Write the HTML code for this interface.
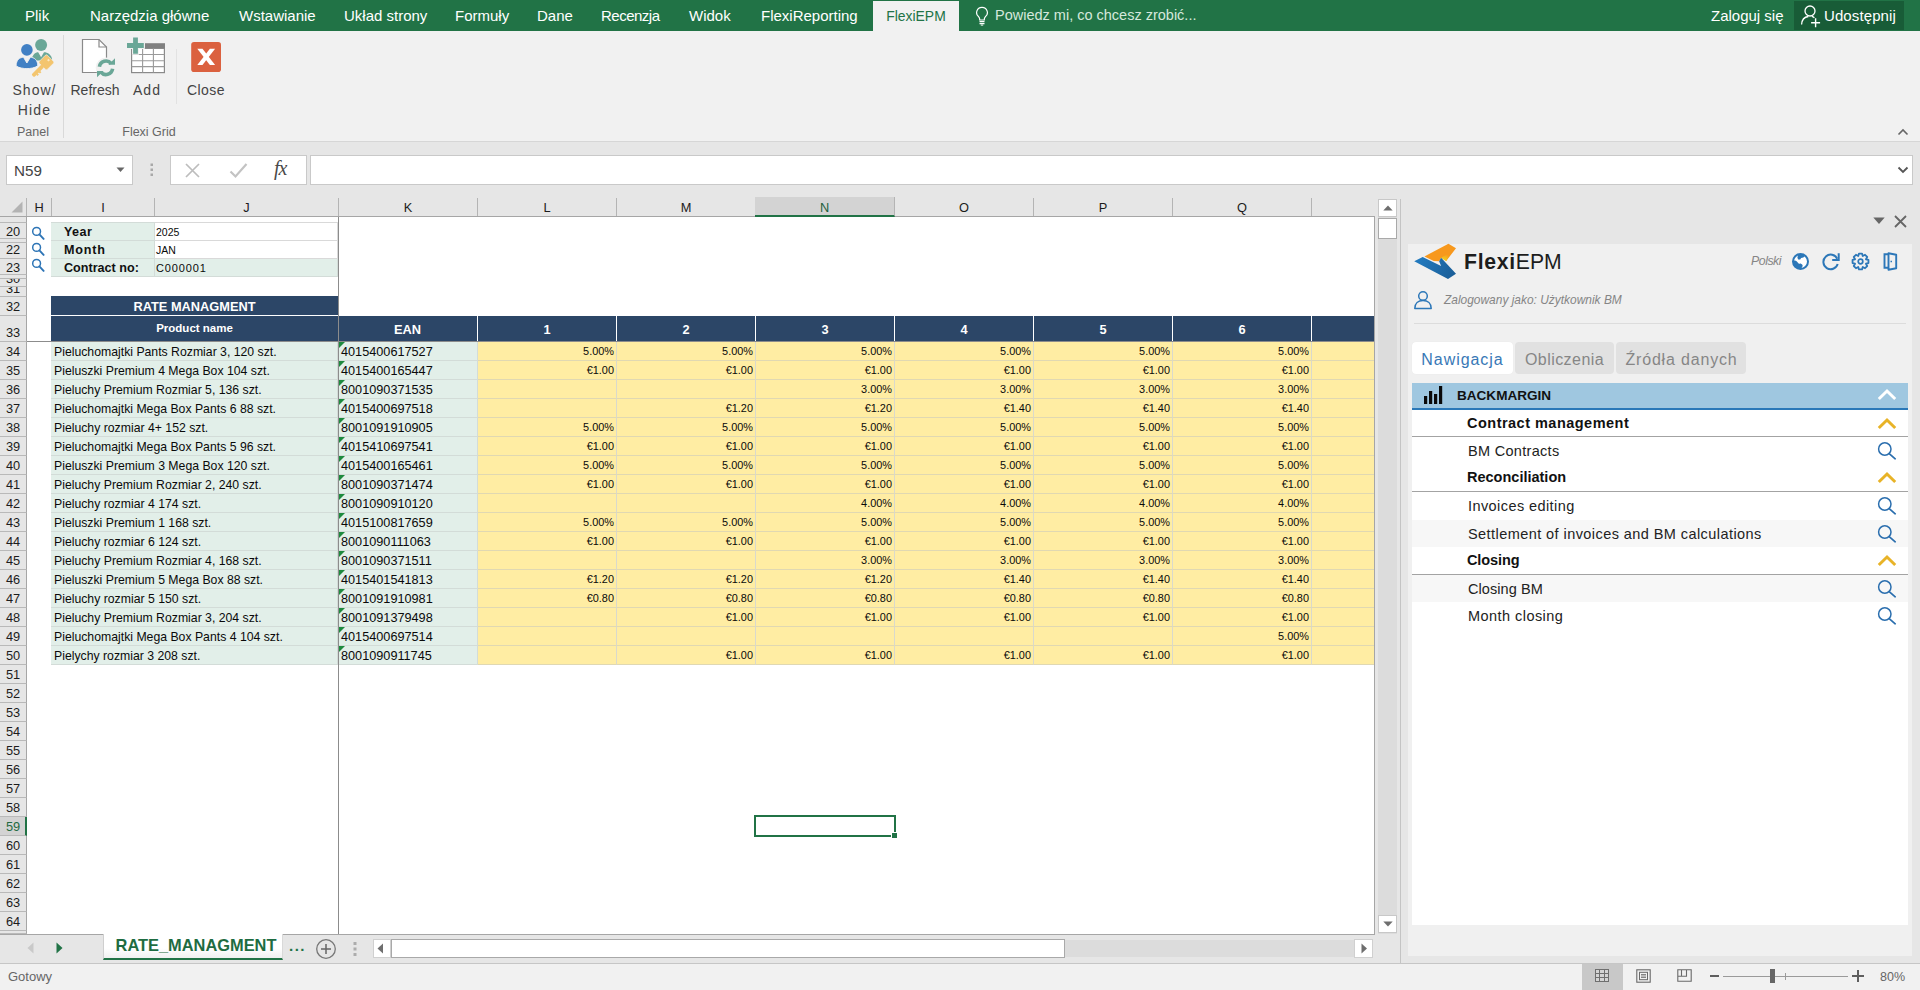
<!DOCTYPE html>
<html lang="pl"><head><meta charset="utf-8"><title>RATE_MANAGMENT - Excel</title>
<style>
*{box-sizing:border-box;margin:0;padding:0}
html,body{width:1920px;height:990px;overflow:hidden;background:#e6e6e6;font-family:"Liberation Sans",sans-serif;color:#444}
body{position:relative}
div,svg,span,i{position:absolute}
/* ribbon */
#tabs{left:0;top:0;width:1920px;height:31px;background:#217346}
#tabs .t{top:0;height:31px;line-height:31px;font-size:15px;color:#fff;white-space:nowrap}
#tabs .act{left:873px;top:1px;width:86px;height:30px;background:#f1f1f1}
#tabs .act span{left:0;width:86px;text-align:center;line-height:31px;font-size:13.9px;color:#217346}
#share{left:1794px;top:1px;width:110px;height:29px;background:#185c37}
#rib{left:0;top:31px;width:1920px;height:111px;background:#f1f1f1;border-bottom:1px solid #d6d6d6}
#rib .lb{font-size:14px;color:#444;white-space:nowrap;text-align:center;line-height:20px}
#rib .gl{font-size:12.5px;color:#666;white-space:nowrap;text-align:center}
#rib .sep{width:1px;background:#d9d9d9}
/* formula bar */
.fbox{background:#fff;border:1px solid #c9c9c9;top:155px;height:30px}
/* grid */
#grid{top:0;left:0;width:1375px;height:934px;background:transparent;margin:0}
.sheet{left:27px;top:217px;width:1347px;height:717px;background:#fff}
.colhdr{left:0;top:197px;width:1375px;height:20px;background:#e6e6e6;border-bottom:1px solid #a6a6a6}
.colhdr .ch{top:1px;height:18px;line-height:19px;font-size:12.8px;color:#1c1c1c;text-align:center;border-right:1px solid #b4b4b4}
.colhdr .ch.sel{background:#d3d3d3;color:#1f5f3c;border-bottom:2px solid #217346;height:20px;top:0;line-height:21px}
.colhdr .ch.last{border-right:none}
.selall{left:11px;top:4px}
.rowhdr{left:0;top:0;width:27px;height:934px}
.rh{left:0;width:27px;background:#e6e6e6;border-right:1px solid #a6a6a6;border-bottom:1px solid #b9b9b9}
.rh span{left:0;width:26px;text-align:center;font-size:12.8px;color:#1c1c1c;top:50%;margin-top:-7px;line-height:15px}
.rh.clip{overflow:hidden}
.rh.clip span{margin-top:0}
.rh.sel{background:#d3d3d3;border-right:2px solid #217346}
.rh.sel span{color:#1f6a42}
.gcell{background:#e2efe9;border-right:1px solid #d3dcd8;border-bottom:1px solid #d3dcd8;white-space:nowrap;color:#0a0a0a;overflow:hidden}
.wcell{background:#fff;border-right:1px solid #d9d9d9;border-bottom:1px solid #d9d9d9;white-space:nowrap;color:#0a0a0a}
.lab{font-weight:700;font-size:12.6px;line-height:18px;padding-left:13px;color:#111}
.val{font-size:10.5px;line-height:19px;padding-left:1px}
.nm{font-size:12.25px;line-height:20px;padding-left:3px}
.ean{font-size:12.7px;line-height:20px;padding-left:2px}
.ean i{left:0;top:0;width:0;height:0;border-top:6px solid #1e8a3e;border-right:6px solid transparent}
.ycell{background:#ffeda3;border-right:1px solid #d9d9cc;border-bottom:1px solid #e0d8b2;white-space:nowrap;color:#0a0a0a;font-size:10.9px;line-height:18px;text-align:right;padding-right:2px}
.dk{background:#2c4667;color:#fff;font-weight:700;text-align:center;white-space:nowrap}
.t1{font-size:12.8px;line-height:21px}
.t2{font-size:11.5px;line-height:24px}
.t3{font-size:12.8px;line-height:28px}
.fz{background:#8c8c8c}
.selbox{left:754px;top:815px;width:142px;height:22px;border:2px solid #217346}
.selh{left:891px;top:832px;width:7px;height:7px;background:#217346;border:1px solid #fff}
.mag{}
</style></head><body>

<div id="tabs">
<div class="t" style="left:25px">Plik</div>
<div class="t" style="left:90px">Narzędzia główne</div>
<div class="t" style="left:239px">Wstawianie</div>
<div class="t" style="left:344px">Układ strony</div>
<div class="t" style="left:455px">Formuły</div>
<div class="t" style="left:537px">Dane</div>
<div class="t" style="left:601px;letter-spacing:-.5px">Recenzja</div>
<div class="t" style="left:689px">Widok</div>
<div class="t" style="left:761px">FlexiReporting</div>
<div class="act"><span>FlexiEPM</span></div>
<svg style="left:975px;top:6px" width="14" height="20" viewBox="0 0 14 20"><path d="M7 1.300a5.300 5.300 0 0 0-3.300 9.500c.7.700 1 1.500 1 2.500v.700h4.600v-.700c0-1 .3-1.800 1-2.500A5.300 5.300 0 0 0 7 1.300Z" fill="none" stroke="#fff" stroke-width="1.200"/><path d="M4.500 15.700h5M4.500 17.600h5" stroke="#fff" stroke-width="1.300"/><path d="M5.800 19.100h2.400" stroke="#fff" stroke-width="1"/></svg>
<div class="t" style="left:995px;color:#d5e8dc;font-size:14.5px">Powiedz mi, co chcesz zrobić...</div>
<div class="t" style="left:1711px">Zaloguj się</div>
<div id="share"></div>
<svg style="left:1800px;top:4px" width="22" height="24" viewBox="0 0 22 24"><circle cx="10" cy="7" r="5" fill="none" stroke="#fff" stroke-width="1.300"/><path d="M1.600 20.500c.2-4.500 2.800-7.500 6.800-8" fill="none" stroke="#fff" stroke-width="1.300"/><path d="M11.800 12.400c1 .2 1.900.7 2.600 1.300" fill="none" stroke="#fff" stroke-width="1.300"/><path d="M15.600 14.200v9M11.100 18.700h9" stroke="#fff" stroke-width="1.400"/></svg>
<div class="t" style="left:1824px;letter-spacing:.1px">Udostępnij</div>
</div>
<div id="rib">
<!-- Show/Hide -->
<svg style="left:14px;top:6px" width="44" height="42" viewBox="0 0 44 42">
 <circle cx="27.100" cy="7.900" r="6" fill="#6aa797"/>
 <path d="M17.800 23.500C17.800 17.800 21.500 15.200 24.200 15.200L27.100 20.200 30 15.200C33.500 15.200 38.200 17.800 38.200 23.500Z" fill="#6aa797"/>
 <circle cx="12.900" cy="12.900" r="6.300" fill="#f1f1f1"/>
 <circle cx="12.900" cy="12.900" r="5.800" fill="#4180c4"/>
 <path d="M2.100 28.800C2.100 22.800 6 20.300 9.500 20.300L12.900 26 16.300 20.300C20 20.300 23.800 22.800 23.800 28.800 21 31 16 31.600 12.900 31.600S4.500 31 2.100 28.800Z" fill="#4180c4" stroke="#f1f1f1" stroke-width=".9"/>
 <g transform="translate(32.400 25.300) rotate(45)"><rect x="-5.700" y="-5.700" width="11.400" height="11.400" rx="1.600" fill="#f3c56f" stroke="#f1f1f1" stroke-width=".6"/><rect x="-1.900" y="5" width="3.800" height="14.300" rx="1.200" fill="#f3c56f"/><rect x="1.500" y="10.500" width="1.900" height="2" fill="#f3c56f"/><rect x="1.500" y="14" width="1.900" height="2" fill="#f3c56f"/><rect x="-1" y="-4" width="2" height="2" fill="#fbe9c3"/></g>
</svg>
<div class="lb" style="left:4px;top:49px;width:60px;letter-spacing:1px;padding-left:1px">Show/</div>
<div class="lb" style="left:4px;top:69px;width:60px;letter-spacing:1.2px;padding-left:1px">Hide</div>
<div class="gl" style="left:3px;top:94px;width:60px">Panel</div>
<div class="sep" style="left:63px;top:4px;height:103px"></div>
<!-- Refresh -->
<svg style="left:80px;top:7px" width="38" height="42" viewBox="0 0 38 42">
 <path d="M2.500 1.500h16.500l7.500 7.500v25.500h-24Z" fill="#fff" stroke="#8a8a8a" stroke-width="1.200"/>
 <path d="M19 1.500v7.500h7.500" fill="none" stroke="#8a8a8a" stroke-width="1.200"/>
 <circle cx="26" cy="29.800" r="10.300" fill="#f1f1f1"/>
 <path d="M19.400 28.800a6.700 6.700 0 0 1 11.800-3.300" fill="none" stroke="#6aa797" stroke-width="3.600"/>
 <path d="M28.400 26.700h6.600v-6.400Z" fill="#6aa797"/>
 <path d="M32.600 30.800a6.700 6.700 0 0 1-11.800 3.300" fill="none" stroke="#6aa797" stroke-width="3.600"/>
 <path d="M23.600 32.900h-6.600v6.400Z" fill="#6aa797"/>
</svg>
<div class="lb" style="left:65px;top:49px;width:60px">Refresh</div>
<!-- Add -->
<svg style="left:126px;top:5px" width="42" height="40" viewBox="0 0 42 40">
 <rect x="5.600" y="12.300" width="32.800" height="24.300" fill="#fff" stroke="#8a8a8a" stroke-width="1.200"/>
 <rect x="19" y="7.200" width="20" height="5.300" fill="#808080"/>
 <path d="M5.600 18.500h32.800M5.600 24.700h32.800M5.600 30.600h32.800M16.600 12.500v24M27.400 12.500v24" stroke="#9a9a9a" stroke-width="1.100" fill="none"/>
 <path d="M0 6.200h6v-5.800h7v5.800h5.800v6.700h-5.800v5.900h-7v-5.900h-6Z" fill="#f1f1f1"/>
 <path d="M9.500 1.400v16.400M1 9.500h16.800" stroke="#6aa797" stroke-width="4.800"/>
</svg>
<div class="lb" style="left:117px;top:49px;width:60px;letter-spacing:1px">Add</div>
<div class="sep" style="left:176px;top:18px;height:55px;background:#e2e2e2"></div>
<!-- Close -->
<svg style="left:191px;top:11px" width="31" height="31" viewBox="0 0 31 31">
 <rect x="0.200" y="0" width="29.800" height="30" rx="2.800" fill="#db613f"/>
 <path d="M6.300 6.700h5.200l12.600 16.300h-5.200Z" fill="#fff"/><path d="M24.100 6.700h-5.200l-12.600 16.300h5.200Z" fill="#fff"/>
</svg>
<div class="lb" style="left:176px;top:49px;width:60px;letter-spacing:.4px">Close</div>
<div class="gl" style="left:109px;top:94px;width:80px">Flexi Grid</div>
<svg style="left:1897px;top:97px" width="12" height="8" viewBox="0 0 12 8"><path d="M1.500 6.500l4.500-4.500 4.500 4.500" fill="none" stroke="#666" stroke-width="1.600"/></svg>
</div>

<div class="fbox" style="left:6px;width:127px"></div>
<div style="left:14px;top:162px;font-size:15.200px;line-height:18px;color:#444">N59</div>
<svg style="left:116px;top:167px" width="9" height="6" viewBox="0 0 9 6"><path d="M0.500 0.500h8l-4 4.500Z" fill="#666"/></svg>
<svg style="left:150px;top:163px" width="4" height="14" viewBox="0 0 4 14"><rect x="0.500" y="0.500" width="2.500" height="2.500" fill="#a8a8a8"/><rect x="0.500" y="5.500" width="2.500" height="2.500" fill="#a8a8a8"/><rect x="0.500" y="10.500" width="2.500" height="2.500" fill="#a8a8a8"/></svg>
<div class="fbox" style="left:170px;width:137px"></div>
<svg style="left:184px;top:162px" width="17" height="17" viewBox="0 0 17 17"><path d="M2 2l13 13M15 2l-13 13" stroke="#bdbdbd" stroke-width="1.700"/></svg>
<svg style="left:229px;top:162px" width="19" height="17" viewBox="0 0 19 17"><path d="M1.500 9.500l5 5 11-12.500" fill="none" stroke="#c3c3c3" stroke-width="2.200"/></svg>
<div style="left:274px;top:157px;width:20px;font-family:'Liberation Serif',serif;font-style:italic;font-weight:400;font-size:20px;line-height:22px;color:#4a4a4a;letter-spacing:-1px">fx</div>
<div class="fbox" style="left:310px;width:1603px"></div>
<svg style="left:1897px;top:166px" width="12" height="8" viewBox="0 0 12 8"><path d="M1.500 1.500l4.500 4.500 4.500-4.500" fill="none" stroke="#555" stroke-width="1.800"/></svg>
<div class="sheet"></div>

<div id="grid">
<div class="colhdr">
<div class="ch" style="left:27px;width:25px">H</div>
<div class="ch" style="left:52px;width:103px">I</div>
<div class="ch" style="left:155px;width:184px">J</div>
<div class="ch" style="left:339px;width:139px">K</div>
<div class="ch" style="left:478px;width:139px">L</div>
<div class="ch" style="left:617px;width:139px">M</div>
<div class="ch sel" style="left:755px;width:140px">N</div>
<div class="ch" style="left:895px;width:139px">O</div>
<div class="ch" style="left:1034px;width:139px">P</div>
<div class="ch" style="left:1173px;width:139px">Q</div>
<div class="ch last" style="left:1312px;width:63px"></div>
<div class="ch" style="left:0;width:27px"></div>
<svg class="selall" width="12" height="12" viewBox="0 0 12 12"><path d="M11.5 0.5V11.5H0.5Z" fill="#b3b3b3"/></svg>
</div>
<div class="rowhdr">
<div class="rh" style="top:217px;height:6px"></div>
<div class="rh" style="top:223px;height:16px"><span>20</span></div>
<div class="rh" style="top:239px;height:4px"></div>
<div class="rh" style="top:243px;height:16px"><span style="margin-top:-8.500px">22</span></div>
<div class="rh" style="top:259px;height:16px"><span>23</span></div>
<div class="rh" style="top:275px;height:4px"></div>
<div class="rh clip" style="top:279px;height:8px"><span style="top:-8.500px">30</span></div>
<div class="rh clip" style="top:287px;height:10px"><span style="top:-6.500px">31</span></div>
<div class="rh" style="top:297px;height:19px"><span>32</span></div>
<div class="rh" style="top:316px;height:26px"><span style="top:auto;bottom:1px;margin:0">33</span></div>
<div class="rh" style="top:342px;height:19px"><span>34</span></div>
<div class="rh" style="top:361px;height:19px"><span>35</span></div>
<div class="rh" style="top:380px;height:19px"><span>36</span></div>
<div class="rh" style="top:399px;height:19px"><span>37</span></div>
<div class="rh" style="top:418px;height:19px"><span>38</span></div>
<div class="rh" style="top:437px;height:19px"><span>39</span></div>
<div class="rh" style="top:456px;height:19px"><span>40</span></div>
<div class="rh" style="top:475px;height:19px"><span>41</span></div>
<div class="rh" style="top:494px;height:19px"><span>42</span></div>
<div class="rh" style="top:513px;height:19px"><span>43</span></div>
<div class="rh" style="top:532px;height:19px"><span>44</span></div>
<div class="rh" style="top:551px;height:19px"><span>45</span></div>
<div class="rh" style="top:570px;height:19px"><span>46</span></div>
<div class="rh" style="top:589px;height:19px"><span>47</span></div>
<div class="rh" style="top:608px;height:19px"><span>48</span></div>
<div class="rh" style="top:627px;height:19px"><span>49</span></div>
<div class="rh" style="top:646px;height:19px"><span>50</span></div>
<div class="rh" style="top:665px;height:19px"><span>51</span></div>
<div class="rh" style="top:684px;height:19px"><span>52</span></div>
<div class="rh" style="top:703px;height:19px"><span>53</span></div>
<div class="rh" style="top:722px;height:19px"><span>54</span></div>
<div class="rh" style="top:741px;height:19px"><span>55</span></div>
<div class="rh" style="top:760px;height:19px"><span>56</span></div>
<div class="rh" style="top:779px;height:19px"><span>57</span></div>
<div class="rh" style="top:798px;height:19px"><span>58</span></div>
<div class="rh sel" style="top:817px;height:19px"><span>59</span></div>
<div class="rh" style="top:836px;height:19px"><span>60</span></div>
<div class="rh" style="top:855px;height:19px"><span>61</span></div>
<div class="rh" style="top:874px;height:19px"><span>62</span></div>
<div class="rh" style="top:893px;height:19px"><span>63</span></div>
<div class="rh" style="top:912px;height:19px"><span>64</span></div>
<div class="rh" style="top:931px;height:3px"></div>
</div>
<div class="gcell lab" style="left:51px;top:222px;width:104px;height:19px;border-top:1px solid #d3dcd8;letter-spacing:.4px">Year</div>
<div class="wcell val" style="left:155px;top:222px;width:183px;height:19px;border-top:1px solid #d9d9d9">2025</div>
<div class="gcell lab" style="left:51px;top:241px;width:104px;height:18px;letter-spacing:.8px">Month</div>
<div class="wcell val" style="left:155px;top:241px;width:183px;height:18px">JAN</div>
<div class="gcell lab" style="left:51px;top:259px;width:104px;height:18px">Contract no:</div>
<div class="gcell val" style="left:155px;top:259px;width:183px;height:18px;font-size:11px;letter-spacing:.85px">C000001</div>
<svg class="mag" style="left:31px;top:226px" width="14" height="14" viewBox="0 0 14 14"><circle cx="5.6" cy="5.4" r="3.9" fill="none" stroke="#2e75b6" stroke-width="1.5"/><path d="M8.4 8.4L12.6 12.9" stroke="#2e75b6" stroke-width="1.9" stroke-linecap="round"/></svg>
<svg class="mag" style="left:31px;top:242px" width="14" height="14" viewBox="0 0 14 14"><circle cx="5.6" cy="5.4" r="3.9" fill="none" stroke="#2e75b6" stroke-width="1.5"/><path d="M8.4 8.4L12.6 12.9" stroke="#2e75b6" stroke-width="1.9" stroke-linecap="round"/></svg>
<svg class="mag" style="left:31px;top:258px" width="14" height="14" viewBox="0 0 14 14"><circle cx="5.6" cy="5.4" r="3.9" fill="none" stroke="#2e75b6" stroke-width="1.5"/><path d="M8.4 8.4L12.6 12.9" stroke="#2e75b6" stroke-width="1.9" stroke-linecap="round"/></svg>
<div class="dk t1" style="left:51px;top:296px;width:287px;height:19px">RATE MANAGMENT</div>
<div class="dk t2" style="left:51px;top:316px;width:287px;height:25px">Product name</div>
<div class="dk t3" style="left:338px;top:316px;width:139px;height:25px">EAN</div>
<div class="dk t3" style="left:478px;top:316px;width:138px;height:25px">1</div>
<div class="dk t3" style="left:617px;top:316px;width:138px;height:25px">2</div>
<div class="dk t3" style="left:756px;top:316px;width:138px;height:25px">3</div>
<div class="dk t3" style="left:895px;top:316px;width:138px;height:25px">4</div>
<div class="dk t3" style="left:1034px;top:316px;width:138px;height:25px">5</div>
<div class="dk t3" style="left:1173px;top:316px;width:138px;height:25px">6</div>
<div class="dk t3" style="left:1312px;top:316px;width:62px;height:25px"></div>
<div class="gcell nm" style="left:51px;top:342px;width:287px;height:19px">Pieluchomajtki Pants Rozmiar 3, 120 szt.</div>
<div class="gcell ean" style="left:339px;top:342px;width:139px;height:19px"><i></i>4015400617527</div>
<div class="ycell" style="left:478px;top:342px;width:139px;height:19px">5.00%</div>
<div class="ycell" style="left:617px;top:342px;width:139px;height:19px">5.00%</div>
<div class="ycell" style="left:756px;top:342px;width:139px;height:19px">5.00%</div>
<div class="ycell" style="left:895px;top:342px;width:139px;height:19px">5.00%</div>
<div class="ycell" style="left:1034px;top:342px;width:139px;height:19px">5.00%</div>
<div class="ycell" style="left:1173px;top:342px;width:139px;height:19px">5.00%</div>
<div class="ycell" style="left:1312px;top:342px;width:63px;height:19px"></div>
<div class="gcell nm" style="left:51px;top:361px;width:287px;height:19px">Pieluszki Premium 4 Mega Box 104 szt.</div>
<div class="gcell ean" style="left:339px;top:361px;width:139px;height:19px"><i></i>4015400165447</div>
<div class="ycell" style="left:478px;top:361px;width:139px;height:19px">€1.00</div>
<div class="ycell" style="left:617px;top:361px;width:139px;height:19px">€1.00</div>
<div class="ycell" style="left:756px;top:361px;width:139px;height:19px">€1.00</div>
<div class="ycell" style="left:895px;top:361px;width:139px;height:19px">€1.00</div>
<div class="ycell" style="left:1034px;top:361px;width:139px;height:19px">€1.00</div>
<div class="ycell" style="left:1173px;top:361px;width:139px;height:19px">€1.00</div>
<div class="ycell" style="left:1312px;top:361px;width:63px;height:19px"></div>
<div class="gcell nm" style="left:51px;top:380px;width:287px;height:19px">Pieluchy Premium Rozmiar 5, 136 szt.</div>
<div class="gcell ean" style="left:339px;top:380px;width:139px;height:19px"><i></i>8001090371535</div>
<div class="ycell" style="left:478px;top:380px;width:139px;height:19px"></div>
<div class="ycell" style="left:617px;top:380px;width:139px;height:19px"></div>
<div class="ycell" style="left:756px;top:380px;width:139px;height:19px">3.00%</div>
<div class="ycell" style="left:895px;top:380px;width:139px;height:19px">3.00%</div>
<div class="ycell" style="left:1034px;top:380px;width:139px;height:19px">3.00%</div>
<div class="ycell" style="left:1173px;top:380px;width:139px;height:19px">3.00%</div>
<div class="ycell" style="left:1312px;top:380px;width:63px;height:19px"></div>
<div class="gcell nm" style="left:51px;top:399px;width:287px;height:19px">Pieluchomajtki Mega Box Pants 6 88 szt.</div>
<div class="gcell ean" style="left:339px;top:399px;width:139px;height:19px"><i></i>4015400697518</div>
<div class="ycell" style="left:478px;top:399px;width:139px;height:19px"></div>
<div class="ycell" style="left:617px;top:399px;width:139px;height:19px">€1.20</div>
<div class="ycell" style="left:756px;top:399px;width:139px;height:19px">€1.20</div>
<div class="ycell" style="left:895px;top:399px;width:139px;height:19px">€1.40</div>
<div class="ycell" style="left:1034px;top:399px;width:139px;height:19px">€1.40</div>
<div class="ycell" style="left:1173px;top:399px;width:139px;height:19px">€1.40</div>
<div class="ycell" style="left:1312px;top:399px;width:63px;height:19px"></div>
<div class="gcell nm" style="left:51px;top:418px;width:287px;height:19px">Pieluchy rozmiar 4+ 152 szt.</div>
<div class="gcell ean" style="left:339px;top:418px;width:139px;height:19px"><i></i>8001091910905</div>
<div class="ycell" style="left:478px;top:418px;width:139px;height:19px">5.00%</div>
<div class="ycell" style="left:617px;top:418px;width:139px;height:19px">5.00%</div>
<div class="ycell" style="left:756px;top:418px;width:139px;height:19px">5.00%</div>
<div class="ycell" style="left:895px;top:418px;width:139px;height:19px">5.00%</div>
<div class="ycell" style="left:1034px;top:418px;width:139px;height:19px">5.00%</div>
<div class="ycell" style="left:1173px;top:418px;width:139px;height:19px">5.00%</div>
<div class="ycell" style="left:1312px;top:418px;width:63px;height:19px"></div>
<div class="gcell nm" style="left:51px;top:437px;width:287px;height:19px">Pieluchomajtki Mega Box Pants 5 96 szt.</div>
<div class="gcell ean" style="left:339px;top:437px;width:139px;height:19px"><i></i>4015410697541</div>
<div class="ycell" style="left:478px;top:437px;width:139px;height:19px">€1.00</div>
<div class="ycell" style="left:617px;top:437px;width:139px;height:19px">€1.00</div>
<div class="ycell" style="left:756px;top:437px;width:139px;height:19px">€1.00</div>
<div class="ycell" style="left:895px;top:437px;width:139px;height:19px">€1.00</div>
<div class="ycell" style="left:1034px;top:437px;width:139px;height:19px">€1.00</div>
<div class="ycell" style="left:1173px;top:437px;width:139px;height:19px">€1.00</div>
<div class="ycell" style="left:1312px;top:437px;width:63px;height:19px"></div>
<div class="gcell nm" style="left:51px;top:456px;width:287px;height:19px">Pieluszki Premium 3 Mega Box 120 szt.</div>
<div class="gcell ean" style="left:339px;top:456px;width:139px;height:19px"><i></i>4015400165461</div>
<div class="ycell" style="left:478px;top:456px;width:139px;height:19px">5.00%</div>
<div class="ycell" style="left:617px;top:456px;width:139px;height:19px">5.00%</div>
<div class="ycell" style="left:756px;top:456px;width:139px;height:19px">5.00%</div>
<div class="ycell" style="left:895px;top:456px;width:139px;height:19px">5.00%</div>
<div class="ycell" style="left:1034px;top:456px;width:139px;height:19px">5.00%</div>
<div class="ycell" style="left:1173px;top:456px;width:139px;height:19px">5.00%</div>
<div class="ycell" style="left:1312px;top:456px;width:63px;height:19px"></div>
<div class="gcell nm" style="left:51px;top:475px;width:287px;height:19px">Pieluchy Premium Rozmiar 2, 240 szt.</div>
<div class="gcell ean" style="left:339px;top:475px;width:139px;height:19px"><i></i>8001090371474</div>
<div class="ycell" style="left:478px;top:475px;width:139px;height:19px">€1.00</div>
<div class="ycell" style="left:617px;top:475px;width:139px;height:19px">€1.00</div>
<div class="ycell" style="left:756px;top:475px;width:139px;height:19px">€1.00</div>
<div class="ycell" style="left:895px;top:475px;width:139px;height:19px">€1.00</div>
<div class="ycell" style="left:1034px;top:475px;width:139px;height:19px">€1.00</div>
<div class="ycell" style="left:1173px;top:475px;width:139px;height:19px">€1.00</div>
<div class="ycell" style="left:1312px;top:475px;width:63px;height:19px"></div>
<div class="gcell nm" style="left:51px;top:494px;width:287px;height:19px">Pieluchy rozmiar 4 174 szt.</div>
<div class="gcell ean" style="left:339px;top:494px;width:139px;height:19px"><i></i>8001090910120</div>
<div class="ycell" style="left:478px;top:494px;width:139px;height:19px"></div>
<div class="ycell" style="left:617px;top:494px;width:139px;height:19px"></div>
<div class="ycell" style="left:756px;top:494px;width:139px;height:19px">4.00%</div>
<div class="ycell" style="left:895px;top:494px;width:139px;height:19px">4.00%</div>
<div class="ycell" style="left:1034px;top:494px;width:139px;height:19px">4.00%</div>
<div class="ycell" style="left:1173px;top:494px;width:139px;height:19px">4.00%</div>
<div class="ycell" style="left:1312px;top:494px;width:63px;height:19px"></div>
<div class="gcell nm" style="left:51px;top:513px;width:287px;height:19px">Pieluszki Premium 1 168 szt.</div>
<div class="gcell ean" style="left:339px;top:513px;width:139px;height:19px"><i></i>4015100817659</div>
<div class="ycell" style="left:478px;top:513px;width:139px;height:19px">5.00%</div>
<div class="ycell" style="left:617px;top:513px;width:139px;height:19px">5.00%</div>
<div class="ycell" style="left:756px;top:513px;width:139px;height:19px">5.00%</div>
<div class="ycell" style="left:895px;top:513px;width:139px;height:19px">5.00%</div>
<div class="ycell" style="left:1034px;top:513px;width:139px;height:19px">5.00%</div>
<div class="ycell" style="left:1173px;top:513px;width:139px;height:19px">5.00%</div>
<div class="ycell" style="left:1312px;top:513px;width:63px;height:19px"></div>
<div class="gcell nm" style="left:51px;top:532px;width:287px;height:19px">Pieluchy rozmiar 6 124 szt.</div>
<div class="gcell ean" style="left:339px;top:532px;width:139px;height:19px"><i></i>8001090111063</div>
<div class="ycell" style="left:478px;top:532px;width:139px;height:19px">€1.00</div>
<div class="ycell" style="left:617px;top:532px;width:139px;height:19px">€1.00</div>
<div class="ycell" style="left:756px;top:532px;width:139px;height:19px">€1.00</div>
<div class="ycell" style="left:895px;top:532px;width:139px;height:19px">€1.00</div>
<div class="ycell" style="left:1034px;top:532px;width:139px;height:19px">€1.00</div>
<div class="ycell" style="left:1173px;top:532px;width:139px;height:19px">€1.00</div>
<div class="ycell" style="left:1312px;top:532px;width:63px;height:19px"></div>
<div class="gcell nm" style="left:51px;top:551px;width:287px;height:19px">Pieluchy Premium Rozmiar 4, 168 szt.</div>
<div class="gcell ean" style="left:339px;top:551px;width:139px;height:19px"><i></i>8001090371511</div>
<div class="ycell" style="left:478px;top:551px;width:139px;height:19px"></div>
<div class="ycell" style="left:617px;top:551px;width:139px;height:19px"></div>
<div class="ycell" style="left:756px;top:551px;width:139px;height:19px">3.00%</div>
<div class="ycell" style="left:895px;top:551px;width:139px;height:19px">3.00%</div>
<div class="ycell" style="left:1034px;top:551px;width:139px;height:19px">3.00%</div>
<div class="ycell" style="left:1173px;top:551px;width:139px;height:19px">3.00%</div>
<div class="ycell" style="left:1312px;top:551px;width:63px;height:19px"></div>
<div class="gcell nm" style="left:51px;top:570px;width:287px;height:19px">Pieluszki Premium 5 Mega Box 88 szt.</div>
<div class="gcell ean" style="left:339px;top:570px;width:139px;height:19px"><i></i>4015401541813</div>
<div class="ycell" style="left:478px;top:570px;width:139px;height:19px">€1.20</div>
<div class="ycell" style="left:617px;top:570px;width:139px;height:19px">€1.20</div>
<div class="ycell" style="left:756px;top:570px;width:139px;height:19px">€1.20</div>
<div class="ycell" style="left:895px;top:570px;width:139px;height:19px">€1.40</div>
<div class="ycell" style="left:1034px;top:570px;width:139px;height:19px">€1.40</div>
<div class="ycell" style="left:1173px;top:570px;width:139px;height:19px">€1.40</div>
<div class="ycell" style="left:1312px;top:570px;width:63px;height:19px"></div>
<div class="gcell nm" style="left:51px;top:589px;width:287px;height:19px">Pieluchy rozmiar 5 150 szt.</div>
<div class="gcell ean" style="left:339px;top:589px;width:139px;height:19px"><i></i>8001091910981</div>
<div class="ycell" style="left:478px;top:589px;width:139px;height:19px">€0.80</div>
<div class="ycell" style="left:617px;top:589px;width:139px;height:19px">€0.80</div>
<div class="ycell" style="left:756px;top:589px;width:139px;height:19px">€0.80</div>
<div class="ycell" style="left:895px;top:589px;width:139px;height:19px">€0.80</div>
<div class="ycell" style="left:1034px;top:589px;width:139px;height:19px">€0.80</div>
<div class="ycell" style="left:1173px;top:589px;width:139px;height:19px">€0.80</div>
<div class="ycell" style="left:1312px;top:589px;width:63px;height:19px"></div>
<div class="gcell nm" style="left:51px;top:608px;width:287px;height:19px">Pieluchy Premium Rozmiar 3, 204 szt.</div>
<div class="gcell ean" style="left:339px;top:608px;width:139px;height:19px"><i></i>8001091379498</div>
<div class="ycell" style="left:478px;top:608px;width:139px;height:19px"></div>
<div class="ycell" style="left:617px;top:608px;width:139px;height:19px">€1.00</div>
<div class="ycell" style="left:756px;top:608px;width:139px;height:19px">€1.00</div>
<div class="ycell" style="left:895px;top:608px;width:139px;height:19px">€1.00</div>
<div class="ycell" style="left:1034px;top:608px;width:139px;height:19px">€1.00</div>
<div class="ycell" style="left:1173px;top:608px;width:139px;height:19px">€1.00</div>
<div class="ycell" style="left:1312px;top:608px;width:63px;height:19px"></div>
<div class="gcell nm" style="left:51px;top:627px;width:287px;height:19px">Pieluchomajtki Mega Box Pants 4 104 szt.</div>
<div class="gcell ean" style="left:339px;top:627px;width:139px;height:19px"><i></i>4015400697514</div>
<div class="ycell" style="left:478px;top:627px;width:139px;height:19px"></div>
<div class="ycell" style="left:617px;top:627px;width:139px;height:19px"></div>
<div class="ycell" style="left:756px;top:627px;width:139px;height:19px"></div>
<div class="ycell" style="left:895px;top:627px;width:139px;height:19px"></div>
<div class="ycell" style="left:1034px;top:627px;width:139px;height:19px"></div>
<div class="ycell" style="left:1173px;top:627px;width:139px;height:19px">5.00%</div>
<div class="ycell" style="left:1312px;top:627px;width:63px;height:19px"></div>
<div class="gcell nm" style="left:51px;top:646px;width:287px;height:19px">Pielychy rozmiar 3 208 szt.</div>
<div class="gcell ean" style="left:339px;top:646px;width:139px;height:19px"><i></i>8001090911745</div>
<div class="ycell" style="left:478px;top:646px;width:139px;height:19px"></div>
<div class="ycell" style="left:617px;top:646px;width:139px;height:19px">€1.00</div>
<div class="ycell" style="left:756px;top:646px;width:139px;height:19px">€1.00</div>
<div class="ycell" style="left:895px;top:646px;width:139px;height:19px">€1.00</div>
<div class="ycell" style="left:1034px;top:646px;width:139px;height:19px">€1.00</div>
<div class="ycell" style="left:1173px;top:646px;width:139px;height:19px">€1.00</div>
<div class="ycell" style="left:1312px;top:646px;width:63px;height:19px"></div>
<div class="fz" style="left:338px;top:217px;width:1px;height:717px"></div>
<div class="fz" style="left:27px;top:341px;width:1347px;height:1px"></div>
<div class="selbox"></div><div class="selh"></div>
</div>
<!-- sheet borders -->
<div style="left:1374px;top:217px;width:1px;height:718px;background:#a6a6a6"></div>
<div style="left:0;top:934px;width:1375px;height:1px;background:#a6a6a6"></div>
<!-- vertical scrollbar -->
<div style="left:1378px;top:199px;width:19px;height:735px;background:#dcdcdc"></div>
<div style="left:1378px;top:199px;width:19px;height:18px;background:#fff;border:1px solid #c8c8c8"></div>
<svg style="left:1383px;top:205px" width="10" height="6" viewBox="0 0 10 6"><path d="M0.300 5.500l4.700-5 4.700 5Z" fill="#6e6e6e"/></svg>
<div style="left:1378px;top:218px;width:19px;height:21px;background:#fff;border:1px solid #a9a9a9"></div>
<div style="left:1378px;top:915px;width:19px;height:18px;background:#fff;border:1px solid #c8c8c8"></div>
<svg style="left:1383px;top:921px" width="10" height="6" viewBox="0 0 10 6"><path d="M0.300 0.500l4.700 5 4.700-5Z" fill="#6e6e6e"/></svg>
<div style="left:1400px;top:199px;width:1px;height:764px;background:#c4c4c4"></div>
<!-- sheet tab bar -->
<svg style="left:27px;top:942px" width="7" height="12" viewBox="0 0 7 12"><path d="M6.500 0.500v11l-6-5.500Z" fill="#c9c9c9"/></svg>
<svg style="left:56px;top:942px" width="7" height="12" viewBox="0 0 7 12"><path d="M0.500 0.500v11l6-5.500Z" fill="#217346"/></svg>
<div style="left:103px;top:934px;width:180px;height:26px;background:linear-gradient(#fff 60%,#f0f0f0);border-bottom:2px solid #217346;border-left:1px solid #cfcfcf;border-right:1px solid #d9d9d9"></div>
<div style="left:103px;top:934px;width:180px;height:24px;line-height:23px;text-align:center;font-weight:700;font-size:16.400px;color:#1e6c41;white-space:nowrap;padding-left:6px">RATE_MANAGMENT</div>
<div style="left:289px;top:934px;width:16px;height:24px;line-height:23px;font-weight:700;font-size:15px;color:#217346;letter-spacing:1.500px">...</div>
<svg style="left:315px;top:938px" width="22" height="22" viewBox="0 0 22 22"><circle cx="11" cy="11" r="9.300" fill="none" stroke="#777" stroke-width="1.300"/><path d="M11 6v10M6 11h10" stroke="#666" stroke-width="1.500"/></svg>
<svg style="left:353px;top:941px" width="4" height="24" viewBox="0 0 4 24"><rect x="0.500" y="1" width="3" height="3" fill="#acacac"/><rect x="0.500" y="6.500" width="3" height="3" fill="#acacac"/><rect x="0.500" y="12" width="3" height="3" fill="#acacac"/></svg>
<!-- horizontal scrollbar -->
<div style="left:373px;top:940px;width:1000px;height:17px;background:#dcdcdc"></div>
<div style="left:373px;top:939px;width:18px;height:19px;background:#fff;border:1px solid #d0d0d0"></div>
<svg style="left:377px;top:943px" width="7" height="11" viewBox="0 0 7 11"><path d="M6 0.500v10l-5.500-5Z" fill="#6e6e6e"/></svg>
<div style="left:391px;top:939px;width:674px;height:19px;background:#fff;border:1px solid #a9a9a9"></div>
<div style="left:1354px;top:939px;width:19px;height:19px;background:#fff;border:1px solid #d0d0d0"></div>
<svg style="left:1361px;top:943px" width="7" height="11" viewBox="0 0 7 11"><path d="M0.500 0.500v10l5.500-5Z" fill="#6e6e6e"/></svg>

<!-- task pane -->
<svg style="left:1873px;top:217px" width="12" height="8" viewBox="0 0 12 8"><path d="M0.300 0.600h11.400l-5.700 6.400Z" fill="#666"/></svg>
<svg style="left:1894px;top:215px" width="13" height="13" viewBox="0 0 13 13"><path d="M1 1l11 11M12 1l-11 11" stroke="#666" stroke-width="1.800"/></svg>
<div style="left:1408px;top:244px;width:504px;height:712px;background:#f0f0f0"></div>
<svg style="left:1412px;top:242px" width="48" height="40" viewBox="0 0 48 40">
<defs><linearGradient id="lgy" gradientUnits="userSpaceOnUse" x1="36" y1="10.500" x2="32.800" y2="18.500"><stop offset="0" stop-color="#f7981d"/><stop offset=".25" stop-color="#f7981d"/><stop offset="1" stop-color="#f1d21f"/></linearGradient>
<linearGradient id="lgb" gradientUnits="userSpaceOnUse" x1="8" y1="16" x2="42" y2="34"><stop offset="0" stop-color="#2279bd"/><stop offset="1" stop-color="#1a5e98"/></linearGradient></defs>
<path d="M12.440 14.440L36.440 1.780 44 6.220 34.220 18.890 29.110 15.780 27.110 19.240 21.780 18.890Z" fill="#f7981d"/>
<path d="M29.110 15.780L39 10 34.220 18.890Z" fill="url(#lgy)"/>
<path d="M2.220 19.330L10.670 14.890 29.110 24 27.110 19.330 29.110 15.780 44 31.780 36 36.890Z" fill="url(#lgb)"/>
</svg>
<div style="left:1464px;top:249px;font-size:21.200px;line-height:26px;color:#1d1d1d;white-space:nowrap"><b style="letter-spacing:.7px">Flexi</b>EPM</div>
<div style="left:1751px;top:253px;font-size:12.300px;line-height:16px;font-style:italic;color:#858585;letter-spacing:-.45px">Polski</div>
<svg style="left:1791px;top:252px" width="19" height="19" viewBox="0 0 19 19"><circle cx="9.500" cy="9.500" r="7.500" fill="#fff" stroke="#2c77b8" stroke-width="2"/>
<path d="M2.300 8.500c1.500-.2 3 .3 4 1.400l1.300 1.500c.5.500 1.400.4 2 .2l1.500 1c.6.400.7 1.300.3 2l-1.400 2.300c-4 .3-7.300-2.700-7.700-6.400Z M7 2.800c1.500-.7 3.500-.9 5.200-.2l1.600 1.300-1.400 1.700-2.300.3-.9 1.700-2-.2-.8-1.700Z" fill="#2c77b8"/></svg>
<svg style="left:1821px;top:252px" width="19" height="19" viewBox="0 0 19 19"><path d="M16.300 6.800A7.300 7.300 0 1 0 16.700 12" fill="none" stroke="#2c77b8" stroke-width="2"/><path d="M17.700 1.300V7.900H11.200" fill="none" stroke="#2c77b8" stroke-width="2"/></svg>
<svg style="left:1851px;top:252px" width="19" height="19" viewBox="0 0 19 19"><path d="M7.97 1.55L11.03 1.55L11.74 4.04L11.77 4.06L14.04 2.79L16.21 4.96L14.94 7.23L14.96 7.26L17.45 7.97L17.45 11.03L14.96 11.74L14.94 11.77L16.21 14.04L14.04 16.21L11.77 14.94L11.74 14.96L11.03 17.45L7.97 17.45L7.26 14.96L7.23 14.94L4.96 16.21L2.79 14.04L4.06 11.77L4.04 11.74L1.55 11.03L1.55 7.97L4.04 7.26L4.06 7.23L2.79 4.96L4.96 2.79L7.23 4.06L7.26 4.04Z" fill="none" stroke="#2c77b8" stroke-width="1.800" stroke-linejoin="round"/><circle cx="9.500" cy="9.500" r="2.300" fill="none" stroke="#2c77b8" stroke-width="1.700"/></svg>
<svg style="left:1883px;top:252px" width="15" height="19" viewBox="0 0 15 19"><path d="M5.500 2.300H1.500v13.400h4" fill="none" stroke="#2c77b8" stroke-width="1.900"/><path d="M5.500 1.200l7.700 1.500v13.600l-7.700 1.500Z" fill="none" stroke="#2c77b8" stroke-width="1.900" stroke-linejoin="round"/><path d="M7.500 9.500h1.500" stroke="#2c77b8" stroke-width="1.300"/></svg>
<svg style="left:1413px;top:290px" width="20" height="20" viewBox="0 0 20 20"><circle cx="10" cy="6" r="4.300" fill="none" stroke="#2c77b8" stroke-width="1.500"/><path d="M1.800 18.500c0-5 3.500-8 8.200-8s8.200 3 8.200 8Z" fill="none" stroke="#2c77b8" stroke-width="1.500" stroke-linejoin="round"/></svg>
<div style="left:1444px;top:292px;font-size:11.950px;line-height:16px;font-style:italic;color:#858585;white-space:nowrap">Zalogowany jako: Użytkownik BM</div>
<div style="left:1414px;top:323px;width:492px;height:1px;background:#dcdcdc"></div>
<div style="left:1412px;top:342px;width:101px;height:32px;background:#fff;border-radius:4px;box-shadow:0 0 1px rgba(0,0,0,.08)"></div>
<div style="left:1412px;top:342px;width:101px;height:32px;line-height:35px;text-align:center;font-size:16px;letter-spacing:.95px;color:#3878b6;white-space:nowrap;padding-left:0">Nawigacja</div>
<div style="left:1515px;top:342px;width:99px;height:32px;background:#e1e1e1;border-radius:4px"></div>
<div style="left:1515px;top:342px;width:99px;height:32px;line-height:35px;text-align:center;font-size:16px;letter-spacing:.45px;color:#868686;white-space:nowrap;padding-left:0">Obliczenia</div>
<div style="left:1616px;top:342px;width:130px;height:32px;background:#e1e1e1;border-radius:4px"></div>
<div style="left:1616px;top:342px;width:130px;height:32px;line-height:35px;text-align:center;font-size:16px;letter-spacing:.83px;color:#868686;white-space:nowrap;padding-left:1px">Źródła danych</div>
<div style="left:1412px;top:383px;width:496px;height:542px;background:#fff"></div>
<div style="left:1412px;top:383px;width:496px;height:27px;background:#9fc7e0;border-bottom:2px solid #2a78b8"></div>
<svg style="left:1423px;top:385px" width="20" height="20" viewBox="0 0 20 20"><path d="M1 11h3.200v8h-3.200ZM6 6h3.200v13h-3.200ZM11 9h3.200v10h-3.200ZM16 1h3.200v18h-3.200Z" fill="#0a0a0a"/></svg>
<div style="left:1457px;top:383px;height:25px;line-height:25px;font-size:13.550px;font-weight:700;color:#111;white-space:nowrap">BACKMARGIN</div>
<svg style="left:1877px;top:388px" width="20" height="13" viewBox="0 0 20 13"><path d="M1.800 11l8.200-8 8.200 8" fill="none" stroke="#fff" stroke-width="3"/></svg>
<div style="left:1412px;top:436px;width:496px;height:1px;background:#a3a3a3"></div>
<div style="left:1467px;top:410px;height:26px;line-height:26px;font-size:14.500px;letter-spacing:0.48px;font-weight:700;color:#111;white-space:nowrap">Contract management</div>
<svg style="left:1877px;top:417px" width="20" height="13" viewBox="0 0 20 13"><path d="M1.800 11l8.200-8 8.200 8" fill="none" stroke="#e8b327" stroke-width="3"/></svg>
<div style="left:1468px;top:437px;height:27px;line-height:28px;font-size:14.500px;letter-spacing:0.3px;color:#222;white-space:nowrap">BM Contracts</div>
<svg style="left:1876px;top:441px" width="22" height="20" viewBox="0 0 22 20"><circle cx="8.800" cy="8" r="6.200" fill="none" stroke="#2a6eae" stroke-width="1.500"/><path d="M13.200 12.600l6 5.200" stroke="#2a6eae" stroke-width="1.700" stroke-linecap="round"/></svg>
<div style="left:1412px;top:491px;width:496px;height:1px;background:#a3a3a3"></div>
<div style="left:1467px;top:464px;height:27px;line-height:27px;font-size:14.500px;letter-spacing:0px;font-weight:700;color:#111;white-space:nowrap">Reconciliation</div>
<svg style="left:1877px;top:471px" width="20" height="13" viewBox="0 0 20 13"><path d="M1.800 11l8.200-8 8.200 8" fill="none" stroke="#e8b327" stroke-width="3"/></svg>
<div style="left:1468px;top:492px;height:27px;line-height:28px;font-size:14.500px;letter-spacing:0.42px;color:#222;white-space:nowrap">Invoices editing</div>
<svg style="left:1876px;top:496px" width="22" height="20" viewBox="0 0 22 20"><circle cx="8.800" cy="8" r="6.200" fill="none" stroke="#2a6eae" stroke-width="1.500"/><path d="M13.200 12.600l6 5.200" stroke="#2a6eae" stroke-width="1.700" stroke-linecap="round"/></svg>
<div style="left:1412px;top:520px;width:496px;height:27px;background:#f7f7f7"></div>
<div style="left:1468px;top:520px;height:27px;line-height:28px;font-size:14.500px;letter-spacing:0.43px;color:#222;white-space:nowrap">Settlement of invoices and BM calculations</div>
<svg style="left:1876px;top:524px" width="22" height="20" viewBox="0 0 22 20"><circle cx="8.800" cy="8" r="6.200" fill="none" stroke="#2a6eae" stroke-width="1.500"/><path d="M13.200 12.600l6 5.200" stroke="#2a6eae" stroke-width="1.700" stroke-linecap="round"/></svg>
<div style="left:1412px;top:574px;width:496px;height:1px;background:#a3a3a3"></div>
<div style="left:1467px;top:547px;height:27px;line-height:27px;font-size:14.500px;letter-spacing:-0.1px;font-weight:700;color:#111;white-space:nowrap">Closing</div>
<svg style="left:1877px;top:554px" width="20" height="13" viewBox="0 0 20 13"><path d="M1.800 11l8.200-8 8.200 8" fill="none" stroke="#e8b327" stroke-width="3"/></svg>
<div style="left:1412px;top:575px;width:496px;height:27px;background:#f7f7f7"></div>
<div style="left:1468px;top:575px;height:27px;line-height:28px;font-size:14.500px;letter-spacing:0.07px;color:#222;white-space:nowrap">Closing BM</div>
<svg style="left:1876px;top:579px" width="22" height="20" viewBox="0 0 22 20"><circle cx="8.800" cy="8" r="6.200" fill="none" stroke="#2a6eae" stroke-width="1.500"/><path d="M13.200 12.600l6 5.200" stroke="#2a6eae" stroke-width="1.700" stroke-linecap="round"/></svg>
<div style="left:1468px;top:602px;height:28px;line-height:29px;font-size:14.500px;letter-spacing:0.45px;color:#222;white-space:nowrap">Month closing</div>
<svg style="left:1876px;top:606px" width="22" height="20" viewBox="0 0 22 20"><circle cx="8.800" cy="8" r="6.200" fill="none" stroke="#2a6eae" stroke-width="1.500"/><path d="M13.200 12.600l6 5.200" stroke="#2a6eae" stroke-width="1.700" stroke-linecap="round"/></svg>
<!-- status bar -->
<div style="left:0;top:963px;width:1920px;height:27px;background:#f1f1f1;border-top:1px solid #c6c6c6"></div>
<div style="left:8px;top:969px;font-size:13px;line-height:16px;color:#666">Gotowy</div>
<div style="left:1582px;top:964px;width:41px;height:26px;background:#c8c8c8"></div>
<svg style="left:1595px;top:969px" width="14" height="14" viewBox="0 0 14 14" shape-rendering="crispEdges"><rect x="1" y="1" width="12" height="12" fill="#d4d4d4"/><path d="M.5 .5h13v12h-13ZM4.500 .5v12M9.500 .5v12M.5 4.500h13M.5 8.500h13" fill="none" stroke="#6f6f6f" stroke-width="1"/></svg>
<svg style="left:1636px;top:969px" width="15" height="14" viewBox="0 0 15 14"><rect x="0.800" y="0.800" width="13.400" height="12.400" fill="none" stroke="#6a6a6a" stroke-width="1.100"/><rect x="3.500" y="3.300" width="8" height="7.400" fill="none" stroke="#6a6a6a" stroke-width="1"/><path d="M5 5.500h5M5 7h5M5 8.500h5" stroke="#6a6a6a" stroke-width=".8"/></svg>
<svg style="left:1677px;top:969px" width="15" height="13" viewBox="0 0 15 13"><path d="M0.800 0.800h13.400v11.400h-13.400ZM4.500 0.800v6.500h5v-6.500M0.800 7.300h3.700" fill="none" stroke="#6a6a6a" stroke-width="1.100"/></svg>
<div style="left:1710px;top:975px;width:9px;height:2px;background:#5e5e5e"></div>
<div style="left:1723px;top:976px;width:125px;height:1px;background:#9a9a9a"></div>
<div style="left:1770px;top:969px;width:5px;height:14px;background:#666"></div>
<div style="left:1785px;top:973px;width:1px;height:7px;background:#9a9a9a"></div>
<div style="left:1852px;top:975px;width:12px;height:2px;background:#5e5e5e"></div>
<div style="left:1857px;top:970px;width:2px;height:12px;background:#5e5e5e"></div>
<div style="left:1880px;top:969px;font-size:12.500px;line-height:16px;color:#666">80%</div>

</body></html>
